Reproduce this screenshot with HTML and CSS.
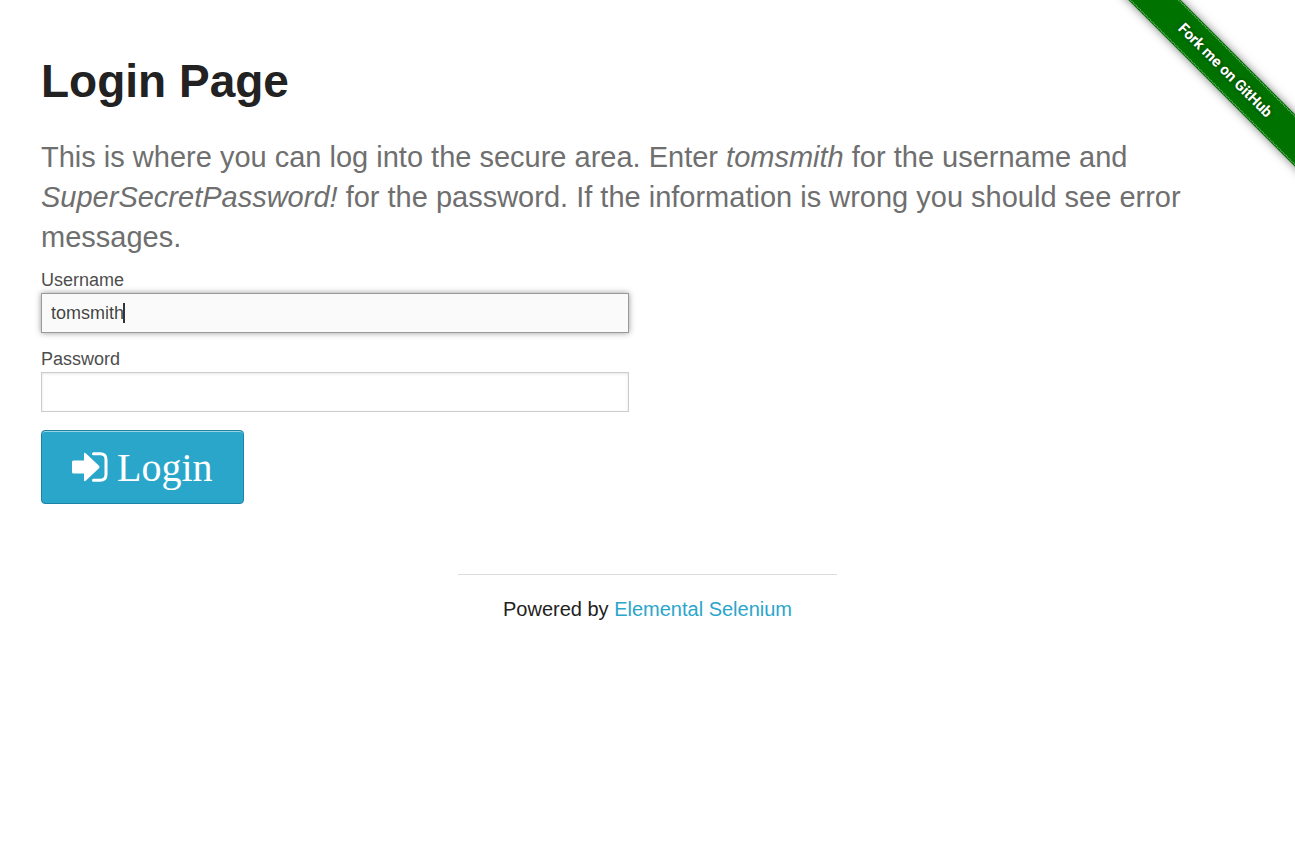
FILE: index.html
```html
<!DOCTYPE html>
<html lang="en">
<head>
  <meta charset="utf-8">
  <meta name="viewport" content="width=device-width, initial-scale=1">
  <title>Login Page</title>
  <link rel="stylesheet" href="styles.css">
</head>
<body>
  <div class="ribbon-corner">
    <a class="ribbon" href="#github">Fork me on GitHub</a>
  </div>

  <main class="row">
    <h1 class="title">Login Page</h1>
    <p class="subheader">This is where you can log into the secure area. Enter <em>tomsmith</em> for the username and <em>SuperSecretPassword!</em> for the password. If the information is wrong you should see error messages.</p>
    <form class="login">
      <div class="field">
        <label for="username">Username</label>
        <div class="control">
          <input class="active" type="text" id="username" name="username" value="tomsmith">
          <span class="caret"></span>
        </div>
      </div>
      <div class="field">
        <label for="password">Password</label>
        <div class="control">
          <input type="password" id="password" name="password">
        </div>
      </div>
      <button class="button" type="submit">
        <svg class="icon" viewBox="0 0 36 30" aria-hidden="true">
          <path d="M1.500 8.500H12V2Q12 -.2 14 1.400L27 13.800Q28 15 27 16.200L14 28.600Q12 30.200 12 28V21.500H1.500Q0 21.500 0 20V10Q0 8.500 1.500 8.500Z" fill="currentColor"/>
          <path d="M21.500 1.800H28Q34 1.800 34 7.500V22.500Q34 28.200 28 28.200H21.500" fill="none" stroke="currentColor" stroke-width="3" stroke-linecap="round"/>
        </svg>
        <span>Login</span>
      </button>
    </form>
  </main>

  <footer class="row">
    <div class="footer-column">
      <hr class="rule">
      <div class="powered">Powered by <a href="#elemental-selenium">Elemental Selenium</a></div>
    </div>
  </footer>
</body>
</html>
```
FILE: styles.css
```css
* {
  box-sizing: border-box;
}

body {
  margin: 0;
  background: #fff;
  color: #222;
  font-family: "Liberation Sans", Arial, sans-serif;
  font-size: 20px;
  line-height: 32px;
}

a {
  color: #2ba6cb;
  text-decoration: none;
}

.row {
  max-width: 1253px;
  margin: 0 auto;
  padding: 0 20px;
}

main.row {
  padding-top: 49px;
}

.title {
  margin: 0 0 24px;
  font-size: 46px;
  line-height: 64px;
}

.subheader {
  margin: 0 0 10px;
  color: #6f6f6f;
  font-size: 29px;
  line-height: 40px;
}

.login {
  width: 50%;
  padding-right: 19px;
}

.field {
  margin-bottom: 13px;
}

.field label {
  display: block;
  color: #4d4d4d;
  font-size: 18px;
  line-height: 26px;
}

.control {
  position: relative;
}

.control input {
  display: block;
  width: 100%;
  height: 40px;
  padding: 0 9px;
  border: 1px solid #ccc;
  border-radius: 0;
  outline: none;
  background: #fff;
  box-shadow: inset 0 1px 3px rgba(0, 0, 0, 0.1);
  color: rgba(0, 0, 0, 0.75);
  font: 18px "Liberation Sans", Arial, sans-serif;
}

.control input.active,
.control input:focus {
  border-color: #999;
  background: #fafafa;
  box-shadow: 0 0 6px #999;
}

.caret {
  position: absolute;
  top: 10px;
  left: 82px;
  width: 2px;
  height: 20px;
  background: #333;
}

.button {
  display: inline-flex;
  align-items: center;
  gap: 9px;
  height: 74px;
  margin-top: 5px;
  padding: 0 30px;
  border: 1px solid #1e83a4;
  border-radius: 4px;
  background: #2ba6cb;
  box-shadow: inset 0 1px 0 rgba(255, 255, 255, 0.5);
  color: #fff;
  font: 40px "Liberation Serif", "Times New Roman", serif;
}

.icon {
  width: 36px;
  height: 30px;
}

.footer-column {
  width: 379px;
  max-width: 100%;
  margin: 70px auto 0;
  text-align: center;
}

.rule {
  margin: 0 0 18px;
  border: 0;
  border-top: 1px solid #ddd;
}

.ribbon-corner {
  position: absolute;
  top: 0;
  right: 0;
  width: 190px;
  height: 190px;
  overflow: hidden;
  pointer-events: none;
}

.ribbon {
  position: absolute;
  top: 52px;
  left: -10px;
  width: 260px;
  padding: 2px 0;
  background: #007200;
  box-shadow: 0 0 10px rgba(0, 0, 0, 0.5);
  color: #fff;
  font: bold 15px/33px Roboto, sans-serif;
  text-align: center;
  text-shadow: 0 0 4px rgba(0, 0, 0, 0.5);
  transform: rotate(45deg);
  pointer-events: auto;
}

.ribbon::before,
.ribbon::after {
  content: "";
  position: absolute;
  right: 0;
  left: 0;
  border-top: 1px dotted #8fc78f;
}

.ribbon::before {
  top: 1px;
}

.ribbon::after {
  bottom: 1px;
}
```
